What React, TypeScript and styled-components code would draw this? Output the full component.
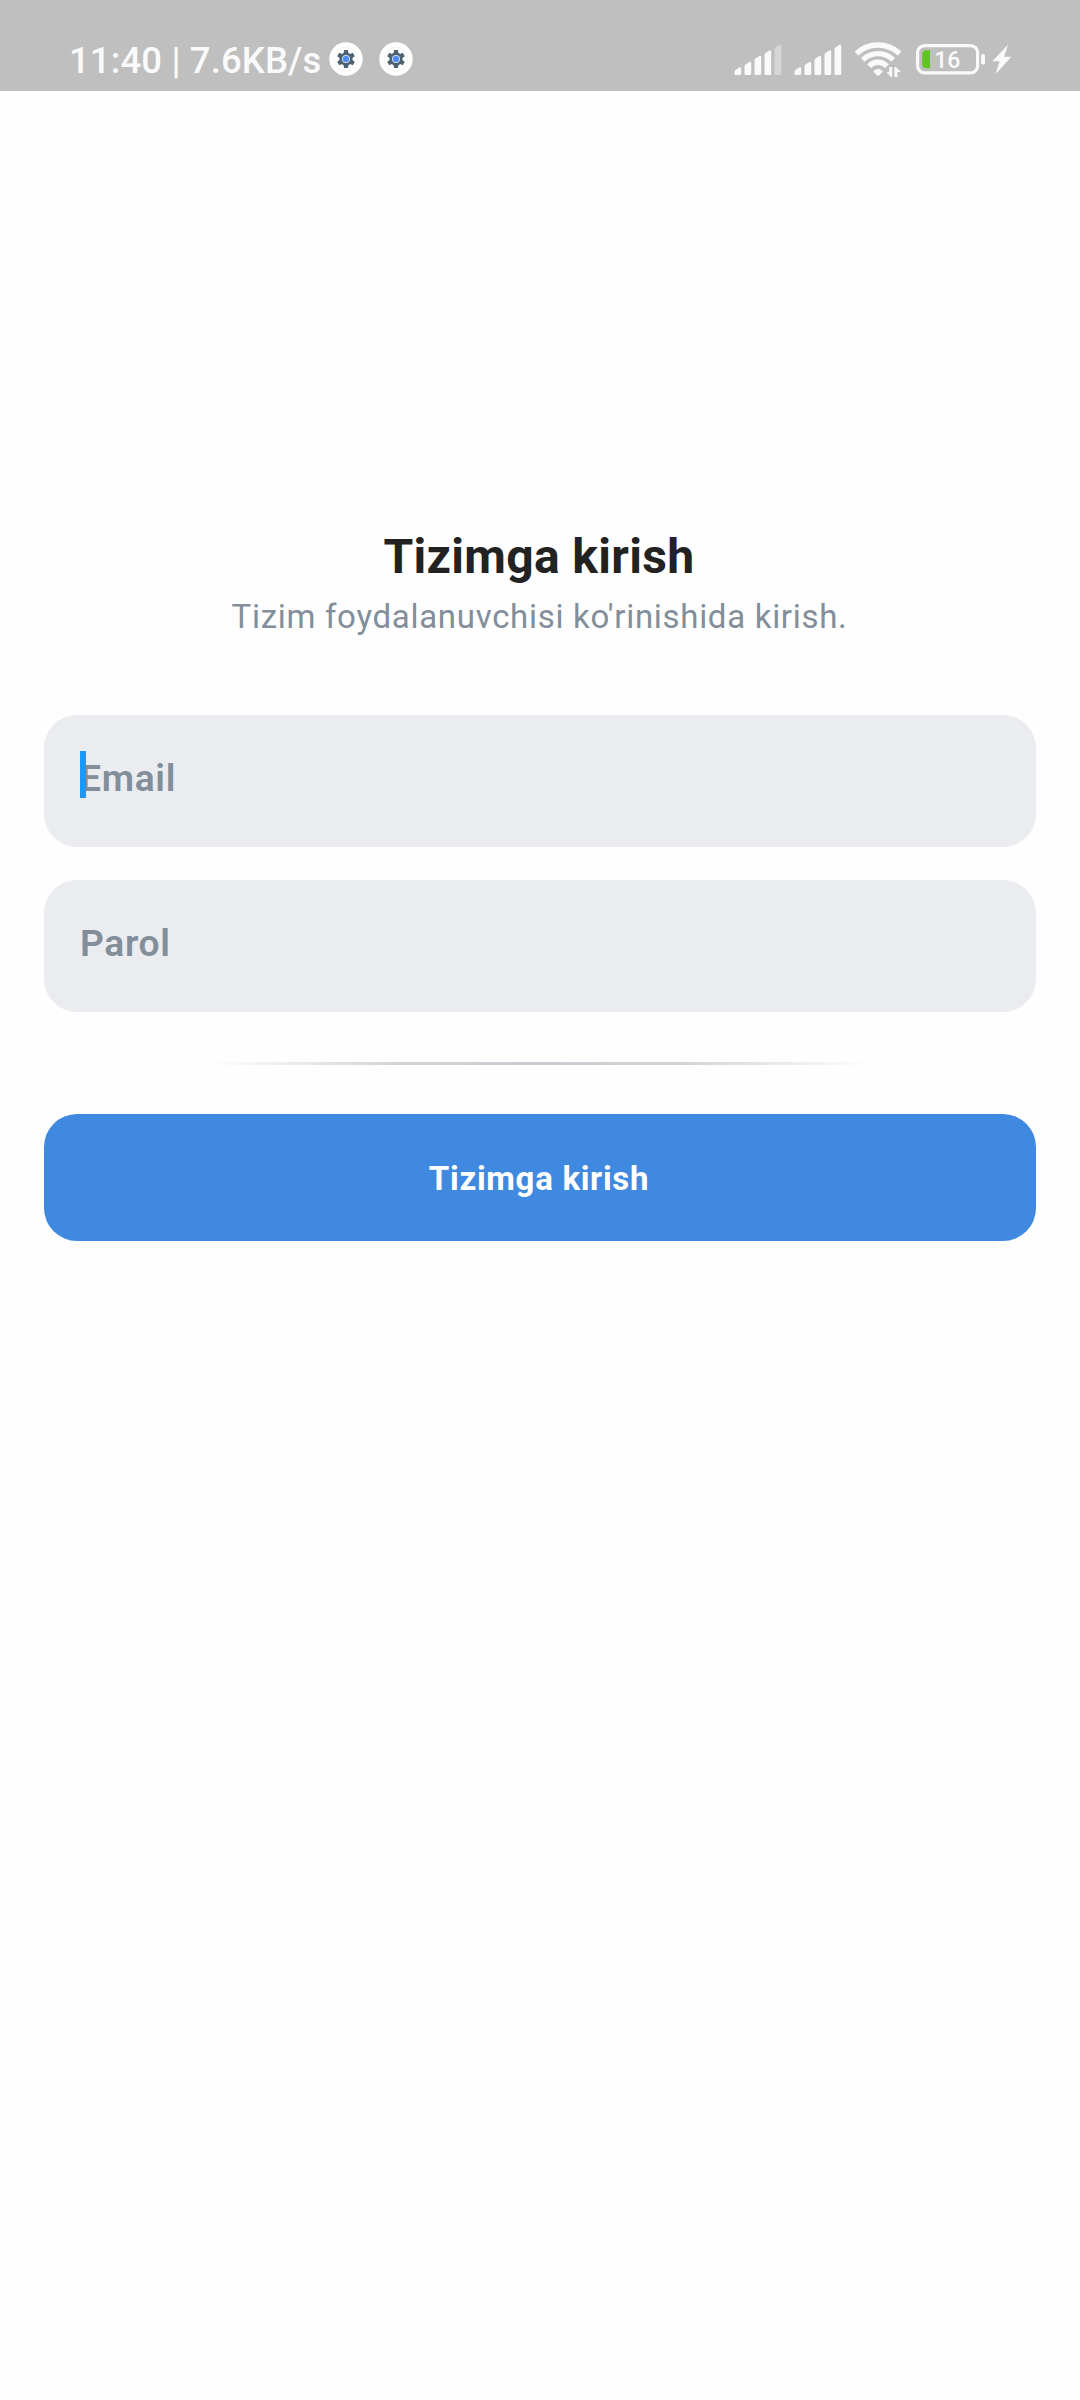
import React from "react";
import styled, { createGlobalStyle } from "styled-components";

const GlobalStyle = createGlobalStyle`
  * { box-sizing: border-box; }
  html, body { margin: 0; padding: 0; background: #fefefe; }
  body { font-family: Roboto, "Noto Sans", sans-serif; }
`;

const Screen = styled.div`
  width: 1080px;
  height: 2400px;
  display: flex;
  flex-direction: column;
  background: #fefefe;
`;

const StatusBar = styled.header`
  height: 91px;
  padding: 26px 68px 0 69px;
  display: flex;
  justify-content: space-between;
  align-items: flex-start;
  background: #bfbfbf;
  color: #fafafa;
`;

const StatusGroup = styled.div<{ $gap: number }>`
  height: 66px;
  display: flex;
  align-items: center;
  gap: ${(p) => p.$gap}px;
`;

const Clock = styled.span`
  width: 260px;
  padding-top: 4px;
  font-size: 36.5px;
  line-height: 42px;
  font-weight: 500;
  letter-spacing: 0.12px;
  white-space: nowrap;
`;

const Icon = styled.svg`
  display: block;
  flex: none;
`;

const BatteryIcon = styled(Icon)`
  margin-right: -6px;
`;

const Login = styled.main`
  display: flex;
  flex-direction: column;
  padding: 437px 44px 0;
`;

const Title = styled.h1`
  margin: 0;
  padding-right: 2px;
  font-size: 48px;
  line-height: 58px;
  font-weight: 700;
  letter-spacing: 0.34px;
  text-align: center;
  color: #222222;
`;

const Subtitle = styled.p`
  margin: 11px 0 0;
  padding-right: 1px;
  height: 40px;
  font-size: 33px;
  line-height: 40px;
  letter-spacing: 0.7px;
  text-align: center;
  color: #828e9a;
`;

const Fields = styled.div`
  margin-top: 78px;
  display: flex;
  flex-direction: column;
  gap: 33px;
`;

const Field = styled.label`
  position: relative;
  height: 132px;
  padding: 41px 36px 0;
  border-radius: 33px;
  background: #ebecf0;
  color: #828e9a;
  font-size: 37.2px;
  line-height: 44px;
  font-weight: 600;
  letter-spacing: 0.7px;
`;

const Caret = styled.span`
  position: absolute;
  left: 36px;
  top: 36px;
  width: 6px;
  height: 47px;
  background: #2196f3;
`;

const Divider = styled.hr`
  width: 660px;
  height: 2.75px;
  margin: 50px auto 49.25px;
  border: 0;
  background: linear-gradient(90deg, rgba(200, 203, 208, 0), #d2d4d7 28%, #c9ccd1 50%, #d2d4d7 72%, rgba(200, 203, 208, 0));
`;

const SubmitButton = styled.button`
  height: 126.5px;
  border: 0;
  padding: 2px 2px 0 0;
  border-radius: 33px;
  background: #3f89e0;
  color: #ffffff;
  font-family: inherit;
  font-size: 33px;
  font-weight: 700;
  letter-spacing: 0.69px;
`;

const TEETH = [0, 60, 120, 180, 240, 300];

const GearBadge = () => (
  <Icon width="34" height="34" viewBox="0 0 34 34">
    <circle cx="17" cy="17" r="16.7" fill="#fff" />
    <circle cx="17" cy="17" r="12" fill="none" stroke="#f0f0f0" strokeWidth="0.8" />
    <g fill="#4d626e">
      <circle cx="17" cy="17" r="6.6" />
      {TEETH.map((a) => (
        <rect key={a} x="14.8" y="8" width="4.4" height="5" rx="0.7" transform={`rotate(${a} 17 17)`} />
      ))}
    </g>
    <circle cx="17" cy="17" r="3.7" fill="#4c8bf5" stroke="#dfe8f2" strokeWidth="0.9" />
  </Icon>
);

const BARS = [8, 13.5, 19.5, 25, 30.5];

const Signal = ({ level }: { level: number }) => (
  <Icon width="48" height="34" viewBox="0 0 48 34">
    {BARS.map((h, i) => {
      const x = i * 10 + 0.5;
      const top = 33 - h;
      return (
        <path
          key={h}
          d={`M${x} ${top + 5} Q${x} ${top + 3.6} ${x + 1} ${top + 3} L${x + 5.2} ${top + 0.2} Q${x + 6.7} ${top} ${x + 6.7} ${top + 1.6} V32 Q${x + 6.7} 33 ${x + 5.7} 33 H${x + 1} Q${x} 33 ${x} 32 Z`}
          fill="#fafafa"
          opacity={i < level ? 1 : 0.4}
        />
      );
    })}
  </Icon>
);

const Wifi = () => (
  <Icon width="48" height="36" viewBox="0 0 48 36">
    <g fill="none" stroke="#fafafa" strokeWidth="5.3">
      <path d="M2.4 12.5 A31.7 31.7 0 0 1 45.6 12.5" />
      <path d="M8.8 18.9 A21.4 21.4 0 0 1 39.2 18.9" />
      <path d="M15.2 25.3 A11.6 11.6 0 0 1 32.8 25.3" />
    </g>
    <path d="M19.2 30.6 Q24 25 28.8 30.6 L25.2 34.2 Q24 35.2 22.8 34.2 Z" fill="#fafafa" />
    <path d="M35.2 26 H38.2 V36 H37 L32.4 31.2 H35.2 Z M40.4 26 H41.8 L46.8 31 H43.4 V36 H40.4 Z" fill="#fafafa" />
  </Icon>
);

const Battery = () => (
  <BatteryIcon width="72" height="31" viewBox="-2 0 72 31">
    <rect x="1.6" y="1.6" width="60" height="27.3" rx="7" fill="none" stroke="#fafafa" strokeWidth="3.2" />
    <path d="M10.5 6.2 H14 V24.2 H10.5 Q6.2 24.2 6.2 20 V10.4 Q6.2 6.2 10.5 6.2 Z" fill="#60c520" />
    <text x="18.2" y="24.4" fontFamily="Roboto, sans-serif" fontSize="23" fontWeight="500" fill="#fafafa">16</text>
    <rect x="65" y="10" width="4" height="10.5" rx="1.8" fill="#fafafa" />
  </BatteryIcon>
);

const Bolt = () => (
  <Icon width="20" height="31" viewBox="0 0 20 31">
    <path d="M16 0.8 L0.4 17.3 H7.6 L3.6 30 L19.4 12.8 H12 Z" fill="#fafafa" />
  </Icon>
);

export default function App() {
  return (
    <>
      <GlobalStyle />
      <Screen>
        <StatusBar>
          <StatusGroup $gap={0}>
            <Clock>11:40 | 7.6KB/s</Clock>
            <StatusGroup $gap={16}>
              <GearBadge />
              <GearBadge />
            </StatusGroup>
          </StatusGroup>
          <StatusGroup $gap={12}>
            <Signal level={4} />
            <Signal level={5} />
            <Wifi />
            <Battery />
            <Bolt />
          </StatusGroup>
        </StatusBar>
        <Login>
          <Title>Tizimga kirish</Title>
          <Subtitle>Tizim foydalanuvchisi ko'rinishida kirish.</Subtitle>
          <Fields>
            <Field>
              Email
              <Caret />
            </Field>
            <Field>Parol</Field>
          </Fields>
          <Divider />
          <SubmitButton>Tizimga kirish</SubmitButton>
        </Login>
      </Screen>
    </>
  );
}
